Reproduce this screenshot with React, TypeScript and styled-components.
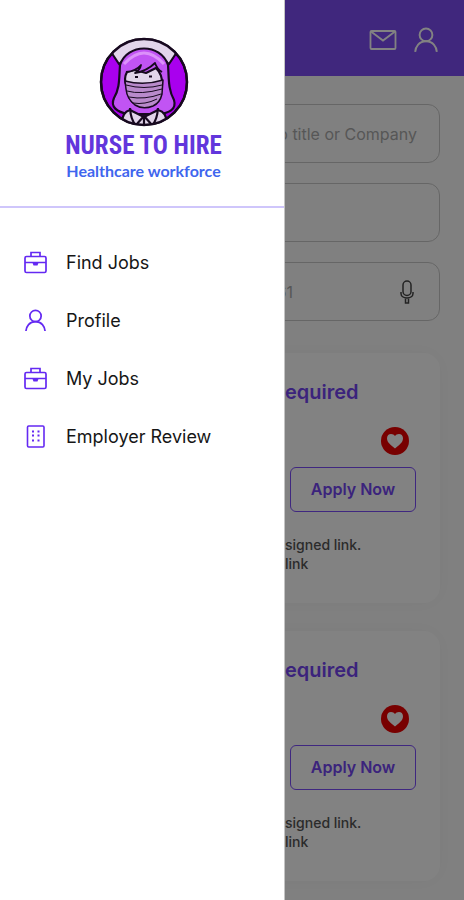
import React from "react";
import styled, { createGlobalStyle } from "styled-components";

const GlobalStyle = createGlobalStyle`
  *, *::before, *::after { box-sizing: border-box; }
  body { margin: 0; background: #fff; font-family: Inter, "Liberation Sans", sans-serif; }
  h1, h2, p, ul { margin: 0; padding: 0; }
`;

const Shell = styled.div`
  position: relative;
  min-height: 100vh;
  max-height: 100vh;
  overflow: hidden;
  background: #fcfcfc;
`;

const TopBar = styled.header`
  display: flex;
  justify-content: flex-end;
  align-items: center;
  gap: 16px;
  height: 76px;
  padding: 4px 25px 0;
  background: #7e4df6;
`;

const IconButton = styled.button`
  display: flex;
  padding: 0;
  border: 0;
  background: none;
  color: #fff;
`;

const SearchForm = styled.form`
  display: flex;
  flex-direction: column;
  gap: 20px;
  padding: 28px 24px 32px;
`;

const Field = styled.label`
  display: flex;
  align-items: center;
  height: 59px;
  padding: 0 22px;
  border: 1px solid #c8c8c8;
  border-radius: 12px;
`;

const FieldInput = styled.input`
  flex: 1;
  min-width: 0;
  border: 0;
  outline: 0;
  background: transparent;
  text-align: right;
  font: 400 16px Inter, sans-serif;
  color: #aaa;
  padding: 0;
  &::placeholder { color: #aaa; opacity: 1; }
`;

const MicButton = styled(IconButton)`
  margin: 0 2px 0 106px;
  color: #444;
`;

const JobList = styled.div`
  display: flex;
  flex-direction: column;
  gap: 28px;
  padding: 0 24px;
`;

const Card = styled.article`
  display: flex;
  justify-content: flex-end;
  height: 250px;
  padding: 27px 24px;
  border-radius: 16px;
  background: #fff;
  box-shadow: 0 0 20px rgba(0, 0, 0, 0.04);
`;

const CardBody = styled.div`
  display: flex;
  flex-direction: column;
  width: 131px;
`;

const JobTitle = styled.h2`
  font-size: 20px;
  line-height: 24px;
  font-weight: 600;
  color: #7446f4;
`;

const SaveButton = styled(IconButton)`
  align-self: flex-end;
  margin: 23px 7px 12px 0;
`;

const ApplyButton = styled.button`
  align-self: flex-end;
  width: 126px;
  height: 45px;
  padding: 0 0 2px;
  border: 1px solid #7c4dfc;
  border-radius: 6px;
  background: none;
  font: 600 16px Inter, sans-serif;
  color: #7446f4;
`;

const JobNote = styled.p`
  margin-top: 23px;
  font-size: 14px;
  line-height: 19px;
  font-weight: 500;
  color: #555;
`;

const Scrim = styled.div`
  position: absolute;
  inset: 0;
  background: rgba(0, 0, 0, 0.49);
`;

const Drawer = styled.aside`
  position: absolute;
  inset: 0 auto 0 0;
  width: 285px;
  background: #fff;
  border-right: 1px solid #c4c4c4;
`;

const Brand = styled.div`
  display: flex;
  flex-direction: column;
  align-items: center;
  height: 208px;
  padding: 37px 0 0 3px;
  border-bottom: 2px solid #cfc6fb;
`;

const BrandName = styled.h1`
  margin-top: 4px;
  font-family: "Roboto Condensed", "Open Sans Condensed", "Liberation Sans Narrow", "Liberation Sans", sans-serif;
  font-size: 25px;
  line-height: 30px;
  font-weight: 700;
  white-space: nowrap;
  color: #6236dc;
`;

const Tagline = styled.p`
  font-family: Lato, sans-serif;
  font-size: 16px;
  line-height: 20px;
  font-weight: 700;
  color: #3f66ee;
`;

const Menu = styled.ul`
  display: flex;
  flex-direction: column;
  gap: 26px;
  padding: 38px 24px;
  list-style: none;
`;

const MenuLink = styled.a`
  display: flex;
  align-items: center;
  gap: 19px;
  height: 32px;
  font-size: 18px;
  color: #161616;
  text-decoration: none;
  svg { color: #6429f2; }
`;

const UserIcon = ({ size }: { size: number }) => (
  <svg width={size} height={size} viewBox="0 0 24 24" fill="none" stroke="currentColor" strokeWidth="1.8" aria-hidden="true">
    <circle cx="12" cy="7.3" r="5.9" />
    <path d="M2 23c.4-5 3.600-9.800 10-9.800S21.600 18 22 23" />
  </svg>
);

const BriefcaseIcon = () => (
  <svg width="23" height="23" viewBox="0 0 23 23" fill="none" stroke="currentColor" strokeWidth="1.7" aria-hidden="true">
    <rect x="1" y="5.500" width="21" height="16" rx="1.500" />
    <path d="M7 5.500V1.500h9v4M1 11.500h21" />
    <path d="M9.500 12h4l-.6 1.700h-2.800z" fill="currentColor" />
  </svg>
);

const BuildingIcon = () => (
  <svg width="23" height="23" viewBox="0 0 23 23" fill="none" stroke="currentColor" strokeWidth="1.600" aria-hidden="true">
    <rect x="3.500" y="1" width="16.500" height="21" rx="1.200" />
    <path d="M8 6.500h2M13.500 6.500h2M8 10.500h2M13.500 10.500h2M8 15.500h2M13.500 15.500h2" strokeWidth="2" />
  </svg>
);

const MailIcon = () => (
  <svg width="28" height="22" viewBox="0 0 28 22" fill="none" stroke="currentColor" strokeWidth="1.800" aria-hidden="true">
    <rect x="1.500" y="2" width="25" height="18" rx="1" />
    <path d="M2 2.500l12 9 12-9" />
  </svg>
);

const MicIcon = () => (
  <svg width="16" height="24" viewBox="0 0 16 24" fill="none" stroke="currentColor" strokeWidth="1.500" aria-hidden="true">
    <rect x="4" y="1" width="8" height="14.500" rx="4" />
    <path d="M2 12v1.500c0 2.500 2.500 4.500 6 4.500s6-2 6-4.500V12M6.500 18v5h3v-5" />
  </svg>
);

const HeartIcon = () => (
  <svg width="28" height="28" viewBox="0 0 28 28" aria-hidden="true">
    <circle cx="14" cy="14" r="14" fill="#ec0000" />
    <path d="M14 21.500C9 17.800 6 15 6 11.300 6 8.500 7.800 7 10 7c1.800 0 3.200.8 4 2 .8-1.200 2.200-2 4-2 2.200 0 4 1.500 4 4.300 0 3.700-3 6.500-8 10.200z" fill="#fff" />
  </svg>
);

const NurseLogo = () => (
  <svg width="90" height="90" viewBox="0 0 90 90" stroke="#17091f" strokeWidth="2.200" strokeLinejoin="round" role="img" aria-label="Nurse to Hire">
    <defs>
      <clipPath id="badge"><circle cx="45" cy="45" r="43" /></clipPath>
    </defs>
    <circle cx="45" cy="45" r="43" fill="#a900ee" />
    <g clipPath="url(#badge)">
      <path d="M12 15L20 27Q45 4 70 27L78 15Q45-17 12 15z" fill="#e2d5ea" />
      <path d="M21 28C28 6 62 6 69 28C70 42 69 52 75 63C78 73 69 76 60 77H29C18 75 11 70 15 61C21 51 20 41 21 28z" fill="#c154f3" />
      <path d="M25 27Q45 5 65 27" fill="none" stroke="#dc91fa" strokeWidth="3" />
      <path d="M24 96Q20 76 31 73L45 80 59 73Q71 76 67 96z" fill="#e2d5ea" />
      <path d="M28 35Q24 42 28 50Q29 64 37 67Q45 71 54 67Q62 62 63 48Q64 38 57 31L47 36 36 33z" fill="#e2d5ea" />
      <path d="M26 44Q45 49 64 43L63 57Q61 66 54 69Q44 73 36 68Q28 62 27 52z" fill="#b98acb" strokeWidth="1.500" />
      <path d="M27 48Q45 53 63 48M28 54Q42 58 63 52M30 60Q46 63 62 57M34 66Q46 68 58 62" fill="none" strokeWidth="1" />
      <path d="M28 35Q37 34 42 28Q41 33 36 36Q48 34 56 26Q59 31 63 36Q65 24 53 22Q36 18 28 30z" fill="#c154f3" stroke="none" />
      <path d="M27 35Q37 34 42 28Q41 33 36 36Q48 34 56 26Q58 32 63 35" fill="none" strokeWidth="1.800" />
      <path d="M36 40h3M50 39.500h3" strokeWidth="2" />
      <path d="M31 71Q32 84 37 88L45 79 53 88Q58 84 59 71M45 80v9" fill="none" />
    </g>
    <circle cx="45" cy="45" r="43" fill="none" strokeWidth="2.500" />
  </svg>
);

const jobs = ["first", "second"];
const menu = [
  { label: "Find Jobs", icon: <BriefcaseIcon /> },
  { label: "Profile", icon: <UserIcon size={23} /> },
  { label: "My Jobs", icon: <BriefcaseIcon /> },
  { label: "Employer Review", icon: <BuildingIcon /> },
];

export default function App() {
  return (
    <>
      <GlobalStyle />
      <Shell>
        <TopBar>
          <IconButton aria-label="Messages"><MailIcon /></IconButton>
          <IconButton aria-label="Account"><UserIcon size={26} /></IconButton>
        </TopBar>
        <main>
          <SearchForm>
            <Field><FieldInput aria-label="Job title or company" placeholder="Job title or Company" /></Field>
            <Field><FieldInput aria-label="Category" /></Field>
            <Field>
              <FieldInput aria-label="Location" placeholder="61" />
              <MicButton type="button" aria-label="Voice search"><MicIcon /></MicButton>
            </Field>
          </SearchForm>
          <JobList>
            {jobs.map((job) => (
              <Card key={job}>
                <CardBody>
                  <JobTitle>equired</JobTitle>
                  <SaveButton aria-label="Save job"><HeartIcon /></SaveButton>
                  <ApplyButton>Apply Now</ApplyButton>
                  <JobNote>signed link.<br />link</JobNote>
                </CardBody>
              </Card>
            ))}
          </JobList>
        </main>
        <Scrim />
        <Drawer>
          <Brand>
            <NurseLogo />
            <BrandName>NURSE TO HIRE</BrandName>
            <Tagline>Healthcare workforce</Tagline>
          </Brand>
          <nav aria-label="Main">
            <Menu>
              {menu.map(({ label, icon }) => (
                <li key={label}><MenuLink href="#">{icon}{label}</MenuLink></li>
              ))}
            </Menu>
          </nav>
        </Drawer>
      </Shell>
    </>
  );
}
